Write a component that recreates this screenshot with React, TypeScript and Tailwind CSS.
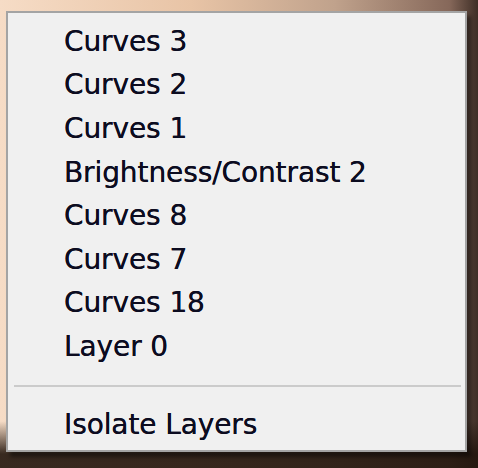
import React from 'react';

const layers = ['Curves 3', 'Curves 2', 'Curves 1', 'Brightness/Contrast 2', 'Curves 8', 'Curves 7', 'Curves 18', 'Layer 0'];

export default function App() {
  return (
    <div
      className="w-[478px] h-[468px] overflow-hidden pt-[11px] pl-[6px]"
      style={{
        background:
          'linear-gradient(180deg, rgba(0,0,0,0) 0%, rgba(0,0,0,0) 90%, rgba(35,22,14,0.9) 97%), linear-gradient(90deg, #f6dcc6 0%, #e8c4a6 40%, #c0a28c 70%, #86685a 94%, #3e2e26 100%)',
      }}
    >
      <div className="w-[461px] h-[441px] bg-[#f0f0f0] border-2 border-[#a4a4a4] shadow-[4px_5px_4px_rgba(0,0,0,0.45)] pt-[7px] font-['DejaVu_Sans',sans-serif] text-[#0c0c20] [text-shadow:0_0_0.6px_#0c0c20]">
        {layers.map((name) => (
          <div key={name} className="h-[43.6px] flex items-center pl-[56px] text-[28px] leading-none tracking-[-0.1px]">
            {name}
          </div>
        ))}
        <div className="h-[34px] flex items-center pl-[6px] pr-[4px]">
          <div className="h-[2px] w-full bg-[#cbcbcb]" />
        </div>
        <div className="h-[43.6px] flex items-center pl-[56px] text-[28px] leading-none tracking-[-0.1px]">Isolate Layers</div>
      </div>
    </div>
  );
}
